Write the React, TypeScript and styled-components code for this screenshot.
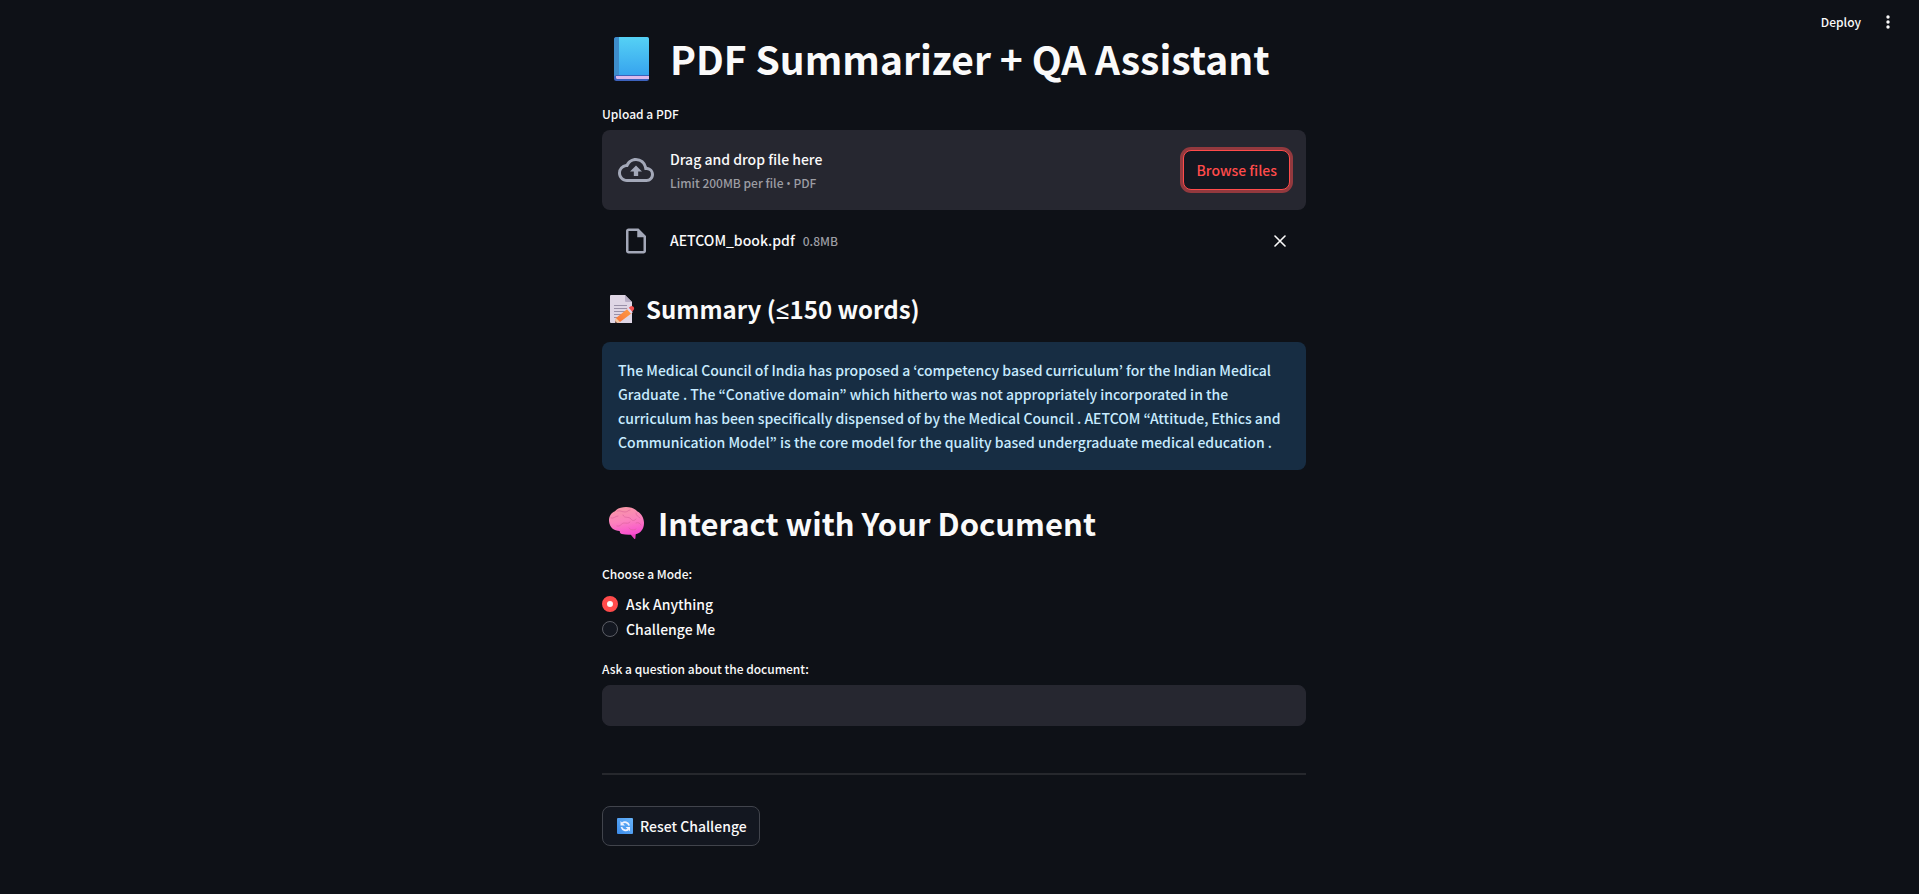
import React, { useRef, useState } from "react";
import styled, { createGlobalStyle } from "styled-components";

const GlobalStyle = createGlobalStyle`
  *, *::before, *::after { box-sizing: border-box; }
  body {
    margin: 0;
    background: #0e1117;
    color: #fafafa;
    font-family: "Noto Sans CJK KR", sans-serif;
    font-size: 14px;
    font-weight: 500;
    line-height: 24px;
  }
  button, input { font: inherit; color: inherit; }
`;

const Page = styled.div`
  position: relative;
  min-height: 100vh;
`;

const Toolbar = styled.header`
  position: absolute;
  top: 0;
  right: 0;
  display: flex;
  align-items: center;
  gap: 12px;
  height: 43px;
  padding: 0 16px;
`;

const ToolbarButton = styled.button`
  display: flex;
  align-items: center;
  justify-content: center;
  min-width: 30px;
  height: 28px;
  padding: 0;
  border: 0;
  background: transparent;
  font-size: 12px;
  cursor: pointer;
`;

const Main = styled.main`
  display: flex;
  justify-content: center;
  padding: 32px 11px 40px 0;
`;

const Column = styled.div`
  display: flex;
  flex-direction: column;
  width: 100%;
  max-width: 704px;
`;

const Title = styled.h1`
  display: flex;
  align-items: center;
  gap: 20px;
  margin: 0;
  padding-left: 12px;
  font-size: 39px;
  font-weight: 700;
  line-height: 53px;
`;

const SectionTitle = styled.h2`
  display: flex;
  align-items: center;
  gap: 14px;
  margin: 0;
  padding-left: 7px;
  font-size: 31px;
  font-weight: 600;
  line-height: 44px;
`;

const SubTitle = styled.h3`
  display: flex;
  align-items: center;
  gap: 11px;
  margin: 0;
  padding-left: 8px;
  font-size: 24px;
  font-weight: 600;
  line-height: 34px;
`;

const Symbol = styled.span`
  font-family: "Open Sans", sans-serif;
  line-height: 1;
`;

const Group = styled.section<{ $top: number }>`
  display: flex;
  flex-direction: column;
  margin-top: ${(p) => p.$top}px;
`;

const FieldLabel = styled.label`
  margin-bottom: 6px;
  font-size: 12px;
  line-height: 21px;
`;

const Dropzone = styled.div`
  display: flex;
  align-items: center;
  height: 80px;
  padding: 0 16px;
  border-radius: 8px;
  background: #262730;
`;

const DropIcon = styled.span`
  display: flex;
  justify-content: center;
  width: 36px;
  margin-right: 16px;
  color: #a3a8b8;
`;

const DropText = styled.div`
  display: flex;
  flex: 1;
  flex-direction: column;
  padding-top: 2px;
`;

const Hint = styled.small`
  color: #9c9da3;
  font-size: 12px;
`;

const HiddenFile = styled.input`
  display: none;
`;

const Button = styled.button<{ $active?: boolean }>`
  display: flex;
  align-items: center;
  justify-content: center;
  gap: 7px;
  min-height: 40px;
  padding: 0 12px 0 ${(p) => (p.$active ? 12 : 14)}px;
  border: 1px solid ${(p) => (p.$active ? "#ff4b4b" : "#41444c")};
  border-radius: 8px;
  background: #131720;
  color: ${(p) => (p.$active ? "#ff4b4b" : "#fafafa")};
  box-shadow: ${(p) => (p.$active ? "0 0 0 3px rgba(255, 75, 75, 0.5)" : "none")};
  cursor: pointer;
`;

const FileRow = styled.div`
  display: flex;
  align-items: center;
  height: 32px;
  margin-top: 15px;
  padding: 0 12px 0 16px;
`;

const FileName = styled.div`
  display: flex;
  flex: 1;
  align-items: baseline;
  gap: 8px;
  padding-bottom: 2px;
`;

const IconButton = styled.button`
  display: flex;
  align-items: center;
  justify-content: center;
  width: 28px;
  height: 28px;
  padding: 0;
  border: 0;
  background: transparent;
  cursor: pointer;
`;

const Info = styled.p`
  margin: 16px 0 0;
  padding: 16px;
  border-radius: 8px;
  background: #172d43;
  color: #c7ebff;
`;

const Fieldset = styled.fieldset`
  display: flex;
  flex-direction: column;
  gap: 1px;
  margin: 18px 0 0;
  padding: 0;
  border: 0;
`;

const Legend = styled.legend`
  margin-bottom: 8px;
  padding: 0;
  font-size: 12px;
  line-height: 21px;
`;

const RadioLabel = styled.label`
  display: flex;
  align-items: center;
  gap: 8px;
  cursor: pointer;
`;

const Radio = styled.input`
  appearance: none;
  width: 16px;
  height: 16px;
  margin: 0;
  border: 1px solid #5b5d65;
  border-radius: 50%;
  background: #131720;

  &:checked {
    border: 5px solid #ff4b4b;
    background: #fafafa;
  }
`;

const TextInput = styled.input`
  height: 41px;
  padding: 0 12px;
  border: 1px solid #262730;
  border-radius: 8px;
  background: #262730;
  outline: 0;
`;

const Divider = styled.hr`
  width: 100%;
  height: 2px;
  margin: 47px 0 31px;
  border: 0;
  background: #26282d;
`;

const Actions = styled.div`
  display: flex;
`;

const BookIcon = () => (
  <svg width="36" height="44" viewBox="0 0 36 44" aria-hidden="true">
    <defs>
      <linearGradient id="book" x1="0" y1="0" x2="0" y2="1">
        <stop offset="0" stopColor="#55d1f5" />
        <stop offset="1" stopColor="#37a4ee" />
      </linearGradient>
    </defs>
    <rect x="0" y="0" width="35" height="44" rx="2.5" fill="#3c62bd" />
    <path d="M2 39h33v3H3.500A1.500 1.500 0 0 1 2 40.500z" fill="#dcb9ec" />
    <path d="M5 0h28a2 2 0 0 1 2 2v36H5z" fill="url(#book)" />
    <path d="M2.500 0H5v38H3c-1 0-2 .6-3 1.600V2.500A2.500 2.500 0 0 1 2.500 0z" fill="#3d8dcb" />
  </svg>
);

const MemoIcon = () => (
  <svg width="25" height="28" viewBox="0 0 25 28" aria-hidden="true">
    <defs>
      <linearGradient id="pencil" x1="1" y1="0" x2="0" y2="1">
        <stop offset="0" stopColor="#ff9e45" />
        <stop offset="1" stopColor="#f7733a" />
      </linearGradient>
    </defs>
    <path d="M1 0h14l7 7v21H1a1 1 0 0 1-1-1V1a1 1 0 0 1 1-1z" fill="#dfd6e5" />
    <path d="M15 0l7 7h-6a1 1 0 0 1-1-1z" fill="#b7adc4" />
    <path d="M4 10.500h13M4 13.500h13M4 16.500h11M4 19.500h8M4 22.500h5" stroke="#9a91a8" strokeWidth="1" />
    <path d="M6 23L18 13.500l4 4.500L10 27l-5 1z" fill="url(#pencil)" />
    <path d="M6 23l4 4-5 1z" fill="#f3c9a5" />
    <path d="M5.400 26.200l1.700 1.400L5 28z" fill="#4a3a48" />
    <path d="M17 14.300l1.800-1.500 4 4.400-1.800 1.500z" fill="#e8d9ee" />
    <path d="M18.800 12.800l1.500-1.300c1-.8 2.200-.7 3.100.3s1 2.400.1 3.300l-1.200 1.600z" fill="#f4504f" />
  </svg>
);

const BrainIcon = () => (
  <svg width="35" height="32" viewBox="0 0 35 32" aria-hidden="true">
    <defs>
      <linearGradient id="brain" x1=".3" y1="0" x2=".55" y2="1">
        <stop offset="0" stopColor="#f897a5" />
        <stop offset=".5" stopColor="#fb82bd" />
        <stop offset="1" stopColor="#fa4fd0" />
      </linearGradient>
    </defs>
    <path d="M20 25l7-1-.6 7.200c-.1.900-.9.900-1.400.2L22 28z" fill="#e83fbc" />
    <path
      d="M0 14C-.3 9 2.500 5.500 6 4.200 8.500 1 13 0 17 0c5 0 9 1.500 11.500 4.500C32.500 6.500 35 11 35 16c0 6-3.500 10.500-8.500 11.300-5 .7-10 .6-13.800-.3-1.300-.4-2-1.500-2-3C5 24 .5 20.500 0 14z"
      fill="url(#brain)"
    />
    <path
      d="M2 11c3 1 4-2 7-2M8 4c3-1 5 1 8 1s3-2 5-2M14 8c1 4 6 1 8 4 1 2 4 2 5 0M27 6c0 3 2 3 4 5M8 19c4 1 4-3 7-3s4 1 6-1M20 21c2 3 6 2 7 1M27 16c2-1 4 0 5 2"
      fill="none"
      stroke="#dc629b"
      strokeWidth="1"
      strokeLinecap="round"
      opacity=".65"
    />
  </svg>
);

const RefreshIcon = () => (
  <svg width="16" height="16" viewBox="0 0 16 16" aria-hidden="true">
    <defs>
      <linearGradient id="refresh" x1="0" y1="1" x2="1" y2="0">
        <stop offset="0" stopColor="#3c8be9" />
        <stop offset="1" stopColor="#67b4fb" />
      </linearGradient>
    </defs>
    <rect width="16" height="16" rx="1" fill="url(#refresh)" />
    <path d="M5.300 5.200C7.500 3.300 11 4 12.200 7.500M11.500 11.300C9 13.200 5.500 12.300 4.400 9" fill="none" stroke="#f1f3ff" strokeWidth="1.700" />
    <path d="M3.500 3v4.500H8zM13 13.300V9H8.600z" fill="#f1f3ff" />
  </svg>
);

const CloudIcon = () => (
  <svg width="36" height="36" viewBox="0 0 24 24" fill="currentColor" aria-hidden="true">
    <path d="M19.350 10.040A7.490 7.490 0 0 0 12 4C9.110 4 6.600 5.640 5.350 8.040A5.994 5.994 0 0 0 0 14c0 3.310 2.690 6 6 6h13c2.760 0 5-2.240 5-5 0-2.640-2.050-4.780-4.650-4.960zM19 18H6c-2.210 0-4-1.790-4-4 0-2.050 1.530-3.760 3.560-3.970l1.070-.11.500-.95A5.469 5.469 0 0 1 12 6c2.620 0 4.880 1.860 5.390 4.430l.300 1.500 1.530.11A2.980 2.980 0 0 1 22 15c0 1.650-1.350 3-3 3zM8 13h2.550v3h2.900v-3H16l-4-4z" />
  </svg>
);

const FileIcon = () => (
  <svg width="30" height="30" viewBox="0 0 24 24" fill="currentColor" aria-hidden="true">
    <path d="M14 2H6c-1.100 0-1.990.9-1.990 2L4 20c0 1.100.89 2 1.990 2H18c1.100 0 2-.9 2-2V8l-6-6zM6 20V4h7v5h5v11H6z" />
  </svg>
);

const CloseIcon = () => (
  <svg width="12" height="12" viewBox="0 0 12 12" aria-hidden="true">
    <path d="M1 1l10 10M11 1L1 11" stroke="currentColor" strokeWidth="1.600" strokeLinecap="round" />
  </svg>
);

const MenuIcon = () => (
  <svg width="4" height="14" viewBox="0 0 4 14" fill="currentColor" aria-hidden="true">
    <circle cx="2" cy="2" r="1.700" />
    <circle cx="2" cy="7" r="1.700" />
    <circle cx="2" cy="12" r="1.700" />
  </svg>
);

const modes = ["Ask Anything", "Challenge Me"];

export default function App() {
  const [mode, setMode] = useState(modes[0]);
  const [question, setQuestion] = useState("");
  const fileInput = useRef<HTMLInputElement>(null);

  return (
    <Page>
      <GlobalStyle />
      <Toolbar>
        <ToolbarButton type="button">Deploy</ToolbarButton>
        <ToolbarButton type="button" aria-label="Main menu">
          <MenuIcon />
        </ToolbarButton>
      </Toolbar>
      <Main>
        <Column>
          <Title>
            <BookIcon />
            PDF Summarizer + QA Assistant
          </Title>

          <Group $top={18}>
            <FieldLabel htmlFor="pdf">Upload a PDF</FieldLabel>
            <Dropzone>
              <DropIcon>
                <CloudIcon />
              </DropIcon>
              <DropText>
                <span>Drag and drop file here</span>
                <Hint>
                  Limit 200MB per file <Symbol>•</Symbol> PDF
                </Hint>
              </DropText>
              <HiddenFile id="pdf" type="file" accept=".pdf" ref={fileInput} />
              <Button type="button" $active onClick={() => fileInput.current?.click()}>
                Browse files
              </Button>
            </Dropzone>
            <FileRow>
              <DropIcon>
                <FileIcon />
              </DropIcon>
              <FileName>
                <span>AETCOM_book.pdf</span>
                <Hint>0.8MB</Hint>
              </FileName>
              <IconButton type="button" aria-label="Remove file">
                <CloseIcon />
              </IconButton>
            </FileRow>
          </Group>

          <Group $top={35}>
            <SubTitle>
              <MemoIcon />
              <span>
                Summary (<Symbol>≤</Symbol>150 words)
              </span>
            </SubTitle>
            <Info>
              The Medical Council of India has proposed a ‘competency based curriculum’ for the Indian Medical
              <br />
              Graduate . The “Conative domain” which hitherto was not appropriately incorporated in the
              <br />
              curriculum has been specifically dispensed of by the Medical Council . AETCOM “Attitude, Ethics and
              <br />
              Communication Model” is the core model for the quality based undergraduate medical education .
            </Info>
          </Group>

          <Group $top={31}>
            <SectionTitle>
              <BrainIcon />
              Interact with Your Document
            </SectionTitle>
            <Fieldset>
              <Legend>Choose a Mode:</Legend>
              {modes.map((name) => (
                <RadioLabel key={name}>
                  <Radio type="radio" name="mode" checked={mode === name} onChange={() => setMode(name)} />
                  {name}
                </RadioLabel>
              ))}
            </Fieldset>
          </Group>

          <Group $top={17}>
            <FieldLabel htmlFor="question">Ask a question about the document:</FieldLabel>
            <TextInput id="question" type="text" value={question} onChange={(e) => setQuestion(e.target.value)} />
          </Group>

          <Divider />
          <Actions>
            <Button type="button">
              <RefreshIcon />
              Reset Challenge
            </Button>
          </Actions>
        </Column>
      </Main>
    </Page>
  );
}
